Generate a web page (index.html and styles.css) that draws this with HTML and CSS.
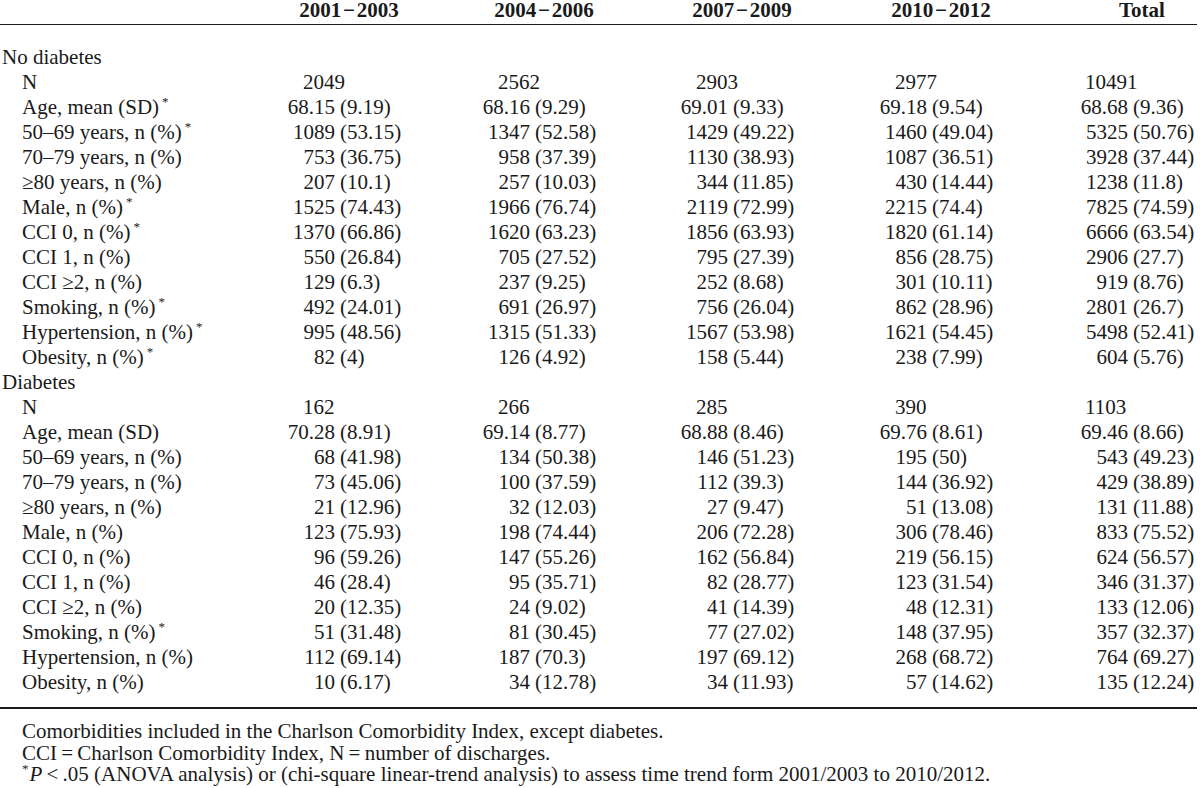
FILE: index.html
```html
<!DOCTYPE html>
<html>
<head>
<meta charset="utf-8">
<link rel="stylesheet" href="styles.css">
</head>
<body>
<div class="page">
  <div class="row head">
    <span></span>
    <span class="hcell"><span class="hbox">2001&#8202;−&#8202;2003</span></span>
    <span class="hcell"><span class="hbox">2004&#8202;−&#8202;2006</span></span>
    <span class="hcell"><span class="hbox">2007&#8202;−&#8202;2009</span></span>
    <span class="hcell"><span class="hbox">2010&#8202;−&#8202;2012</span></span>
    <span class="hcell"><span class="hbox">Total</span></span>
  </div>
  <div class="body">
    <div class="row"><span class="label grp">No diabetes</span></div>
    <div class="row"><span class="label">N</span>
      <span class="cell"><span class="nv">2049</span></span>
      <span class="cell"><span class="nv">2562</span></span>
      <span class="cell"><span class="nv">2903</span></span>
      <span class="cell"><span class="nv">2977</span></span>
      <span class="cell"><span class="nv tot">10491</span></span>
    </div>
    <div class="row"><span class="label">Age, mean (SD)<sup>*</sup></span>
      <span class="cell"><span class="a">68.15</span><span class="b">(9.19)</span></span>
      <span class="cell"><span class="a">68.16</span><span class="b">(9.29)</span></span>
      <span class="cell"><span class="a">69.01</span><span class="b">(9.33)</span></span>
      <span class="cell"><span class="a">69.18</span><span class="b">(9.54)</span></span>
      <span class="cell"><span class="a">68.68</span><span class="b">(9.36)</span></span>
    </div>
    <div class="row"><span class="label">50–69 years, n (%)<sup>*</sup></span>
      <span class="cell"><span class="a">1089</span><span class="b">(53.15)</span></span>
      <span class="cell"><span class="a">1347</span><span class="b">(52.58)</span></span>
      <span class="cell"><span class="a">1429</span><span class="b">(49.22)</span></span>
      <span class="cell"><span class="a">1460</span><span class="b">(49.04)</span></span>
      <span class="cell"><span class="a">5325</span><span class="b">(50.76)</span></span>
    </div>
    <div class="row"><span class="label">70–79 years, n (%)</span>
      <span class="cell"><span class="a">753</span><span class="b">(36.75)</span></span>
      <span class="cell"><span class="a">958</span><span class="b">(37.39)</span></span>
      <span class="cell"><span class="a">1130</span><span class="b">(38.93)</span></span>
      <span class="cell"><span class="a">1087</span><span class="b">(36.51)</span></span>
      <span class="cell"><span class="a">3928</span><span class="b">(37.44)</span></span>
    </div>
    <div class="row"><span class="label">≥80 years, n (%)</span>
      <span class="cell"><span class="a">207</span><span class="b">(10.1)</span></span>
      <span class="cell"><span class="a">257</span><span class="b">(10.03)</span></span>
      <span class="cell"><span class="a">344</span><span class="b">(11.85)</span></span>
      <span class="cell"><span class="a">430</span><span class="b">(14.44)</span></span>
      <span class="cell"><span class="a">1238</span><span class="b">(11.8)</span></span>
    </div>
    <div class="row"><span class="label">Male, n (%)<sup>*</sup></span>
      <span class="cell"><span class="a">1525</span><span class="b">(74.43)</span></span>
      <span class="cell"><span class="a">1966</span><span class="b">(76.74)</span></span>
      <span class="cell"><span class="a">2119</span><span class="b">(72.99)</span></span>
      <span class="cell"><span class="a">2215</span><span class="b">(74.4)</span></span>
      <span class="cell"><span class="a">7825</span><span class="b">(74.59)</span></span>
    </div>
    <div class="row"><span class="label">CCI 0, n (%)<sup>*</sup></span>
      <span class="cell"><span class="a">1370</span><span class="b">(66.86)</span></span>
      <span class="cell"><span class="a">1620</span><span class="b">(63.23)</span></span>
      <span class="cell"><span class="a">1856</span><span class="b">(63.93)</span></span>
      <span class="cell"><span class="a">1820</span><span class="b">(61.14)</span></span>
      <span class="cell"><span class="a">6666</span><span class="b">(63.54)</span></span>
    </div>
    <div class="row"><span class="label">CCI 1, n (%)</span>
      <span class="cell"><span class="a">550</span><span class="b">(26.84)</span></span>
      <span class="cell"><span class="a">705</span><span class="b">(27.52)</span></span>
      <span class="cell"><span class="a">795</span><span class="b">(27.39)</span></span>
      <span class="cell"><span class="a">856</span><span class="b">(28.75)</span></span>
      <span class="cell"><span class="a">2906</span><span class="b">(27.7)</span></span>
    </div>
    <div class="row"><span class="label">CCI ≥2, n (%)</span>
      <span class="cell"><span class="a">129</span><span class="b">(6.3)</span></span>
      <span class="cell"><span class="a">237</span><span class="b">(9.25)</span></span>
      <span class="cell"><span class="a">252</span><span class="b">(8.68)</span></span>
      <span class="cell"><span class="a">301</span><span class="b">(10.11)</span></span>
      <span class="cell"><span class="a">919</span><span class="b">(8.76)</span></span>
    </div>
    <div class="row"><span class="label">Smoking, n (%)<sup>*</sup></span>
      <span class="cell"><span class="a">492</span><span class="b">(24.01)</span></span>
      <span class="cell"><span class="a">691</span><span class="b">(26.97)</span></span>
      <span class="cell"><span class="a">756</span><span class="b">(26.04)</span></span>
      <span class="cell"><span class="a">862</span><span class="b">(28.96)</span></span>
      <span class="cell"><span class="a">2801</span><span class="b">(26.7)</span></span>
    </div>
    <div class="row"><span class="label">Hypertension, n (%)<sup>*</sup></span>
      <span class="cell"><span class="a">995</span><span class="b">(48.56)</span></span>
      <span class="cell"><span class="a">1315</span><span class="b">(51.33)</span></span>
      <span class="cell"><span class="a">1567</span><span class="b">(53.98)</span></span>
      <span class="cell"><span class="a">1621</span><span class="b">(54.45)</span></span>
      <span class="cell"><span class="a">5498</span><span class="b">(52.41)</span></span>
    </div>
    <div class="row"><span class="label">Obesity, n (%)<sup>*</sup></span>
      <span class="cell"><span class="a">82</span><span class="b">(4)</span></span>
      <span class="cell"><span class="a">126</span><span class="b">(4.92)</span></span>
      <span class="cell"><span class="a">158</span><span class="b">(5.44)</span></span>
      <span class="cell"><span class="a">238</span><span class="b">(7.99)</span></span>
      <span class="cell"><span class="a">604</span><span class="b">(5.76)</span></span>
    </div>
    <div class="row"><span class="label grp">Diabetes</span></div>
    <div class="row"><span class="label">N</span>
      <span class="cell"><span class="nv">162</span></span>
      <span class="cell"><span class="nv">266</span></span>
      <span class="cell"><span class="nv">285</span></span>
      <span class="cell"><span class="nv">390</span></span>
      <span class="cell"><span class="nv tot">1103</span></span>
    </div>
    <div class="row"><span class="label">Age, mean (SD)</span>
      <span class="cell"><span class="a">70.28</span><span class="b">(8.91)</span></span>
      <span class="cell"><span class="a">69.14</span><span class="b">(8.77)</span></span>
      <span class="cell"><span class="a">68.88</span><span class="b">(8.46)</span></span>
      <span class="cell"><span class="a">69.76</span><span class="b">(8.61)</span></span>
      <span class="cell"><span class="a">69.46</span><span class="b">(8.66)</span></span>
    </div>
    <div class="row"><span class="label">50–69 years, n (%)</span>
      <span class="cell"><span class="a">68</span><span class="b">(41.98)</span></span>
      <span class="cell"><span class="a">134</span><span class="b">(50.38)</span></span>
      <span class="cell"><span class="a">146</span><span class="b">(51.23)</span></span>
      <span class="cell"><span class="a">195</span><span class="b">(50)</span></span>
      <span class="cell"><span class="a">543</span><span class="b">(49.23)</span></span>
    </div>
    <div class="row"><span class="label">70–79 years, n (%)</span>
      <span class="cell"><span class="a">73</span><span class="b">(45.06)</span></span>
      <span class="cell"><span class="a">100</span><span class="b">(37.59)</span></span>
      <span class="cell"><span class="a">112</span><span class="b">(39.3)</span></span>
      <span class="cell"><span class="a">144</span><span class="b">(36.92)</span></span>
      <span class="cell"><span class="a">429</span><span class="b">(38.89)</span></span>
    </div>
    <div class="row"><span class="label">≥80 years, n (%)</span>
      <span class="cell"><span class="a">21</span><span class="b">(12.96)</span></span>
      <span class="cell"><span class="a">32</span><span class="b">(12.03)</span></span>
      <span class="cell"><span class="a">27</span><span class="b">(9.47)</span></span>
      <span class="cell"><span class="a">51</span><span class="b">(13.08)</span></span>
      <span class="cell"><span class="a">131</span><span class="b">(11.88)</span></span>
    </div>
    <div class="row"><span class="label">Male, n (%)</span>
      <span class="cell"><span class="a">123</span><span class="b">(75.93)</span></span>
      <span class="cell"><span class="a">198</span><span class="b">(74.44)</span></span>
      <span class="cell"><span class="a">206</span><span class="b">(72.28)</span></span>
      <span class="cell"><span class="a">306</span><span class="b">(78.46)</span></span>
      <span class="cell"><span class="a">833</span><span class="b">(75.52)</span></span>
    </div>
    <div class="row"><span class="label">CCI 0, n (%)</span>
      <span class="cell"><span class="a">96</span><span class="b">(59.26)</span></span>
      <span class="cell"><span class="a">147</span><span class="b">(55.26)</span></span>
      <span class="cell"><span class="a">162</span><span class="b">(56.84)</span></span>
      <span class="cell"><span class="a">219</span><span class="b">(56.15)</span></span>
      <span class="cell"><span class="a">624</span><span class="b">(56.57)</span></span>
    </div>
    <div class="row"><span class="label">CCI 1, n (%)</span>
      <span class="cell"><span class="a">46</span><span class="b">(28.4)</span></span>
      <span class="cell"><span class="a">95</span><span class="b">(35.71)</span></span>
      <span class="cell"><span class="a">82</span><span class="b">(28.77)</span></span>
      <span class="cell"><span class="a">123</span><span class="b">(31.54)</span></span>
      <span class="cell"><span class="a">346</span><span class="b">(31.37)</span></span>
    </div>
    <div class="row"><span class="label">CCI ≥2, n (%)</span>
      <span class="cell"><span class="a">20</span><span class="b">(12.35)</span></span>
      <span class="cell"><span class="a">24</span><span class="b">(9.02)</span></span>
      <span class="cell"><span class="a">41</span><span class="b">(14.39)</span></span>
      <span class="cell"><span class="a">48</span><span class="b">(12.31)</span></span>
      <span class="cell"><span class="a">133</span><span class="b">(12.06)</span></span>
    </div>
    <div class="row"><span class="label">Smoking, n (%)<sup>*</sup></span>
      <span class="cell"><span class="a">51</span><span class="b">(31.48)</span></span>
      <span class="cell"><span class="a">81</span><span class="b">(30.45)</span></span>
      <span class="cell"><span class="a">77</span><span class="b">(27.02)</span></span>
      <span class="cell"><span class="a">148</span><span class="b">(37.95)</span></span>
      <span class="cell"><span class="a">357</span><span class="b">(32.37)</span></span>
    </div>
    <div class="row"><span class="label">Hypertension, n (%)</span>
      <span class="cell"><span class="a">112</span><span class="b">(69.14)</span></span>
      <span class="cell"><span class="a">187</span><span class="b">(70.3)</span></span>
      <span class="cell"><span class="a">197</span><span class="b">(69.12)</span></span>
      <span class="cell"><span class="a">268</span><span class="b">(68.72)</span></span>
      <span class="cell"><span class="a">764</span><span class="b">(69.27)</span></span>
    </div>
    <div class="row"><span class="label">Obesity, n (%)</span>
      <span class="cell"><span class="a">10</span><span class="b">(6.17)</span></span>
      <span class="cell"><span class="a">34</span><span class="b">(12.78)</span></span>
      <span class="cell"><span class="a">34</span><span class="b">(11.93)</span></span>
      <span class="cell"><span class="a">57</span><span class="b">(14.62)</span></span>
      <span class="cell"><span class="a">135</span><span class="b">(12.24)</span></span>
    </div>
  </div>
  <div class="notes">
    <p>Comorbidities included in the Charlson Comorbidity Index, except diabetes.</p>
    <p>CCI&thinsp;=&thinsp;Charlson Comorbidity Index, N&thinsp;=&thinsp;number of discharges.</p>
    <p><sup>*</sup><i>P</i>&thinsp;&lt;&thinsp;.05 (ANOVA analysis) or (chi-square linear-trend analysis) to assess time trend form 2001/2003 to 2010/2012.</p>
  </div>
</div>
</body>
</html>
```

FILE: styles.css
```css
html, body {
  margin: 0;
  padding: 0;
  background: #ffffff;
}

body {
  font-family: "Liberation Serif", "Times New Roman", serif;
  font-size: 21px;
  color: #1a1a1a;
}

.page {
  width: 1197px;
}

.row {
  display: grid;
  grid-template-columns: 265px 195px 198px 199px 201px 139px;
  height: 25px;
  line-height: 25px;
  white-space: nowrap;
}

.head {
  height: 24px;
  line-height: 20px;
  font-weight: bold;
  border-bottom: 1px solid #1a1a1a;
}

.hbox {
  display: inline-block;
  width: 168px;
  text-align: center;
}

.body {
  padding-top: 20px;
  padding-bottom: 12px;
  border-bottom: 2px solid #1a1a1a;
}

.label {
  padding-left: 22px;
}

.label.grp {
  padding-left: 2px;
}

sup {
  font-size: 13px;
  line-height: 0;
  vertical-align: 8px;
  margin-left: 3px;
}

.a {
  display: inline-block;
  width: 70px;
  text-align: right;
}

.b {
  padding-left: 5px;
}

.nv {
  padding-left: 38px;
}

.nv.tot {
  padding-left: 27px;
}

.notes {
  padding-top: 12px;
  padding-left: 22px;
}

.notes p {
  margin: 0;
  line-height: 21.5px;
}

.notes sup {
  margin-left: 0;
  margin-right: 1px;
}
```
